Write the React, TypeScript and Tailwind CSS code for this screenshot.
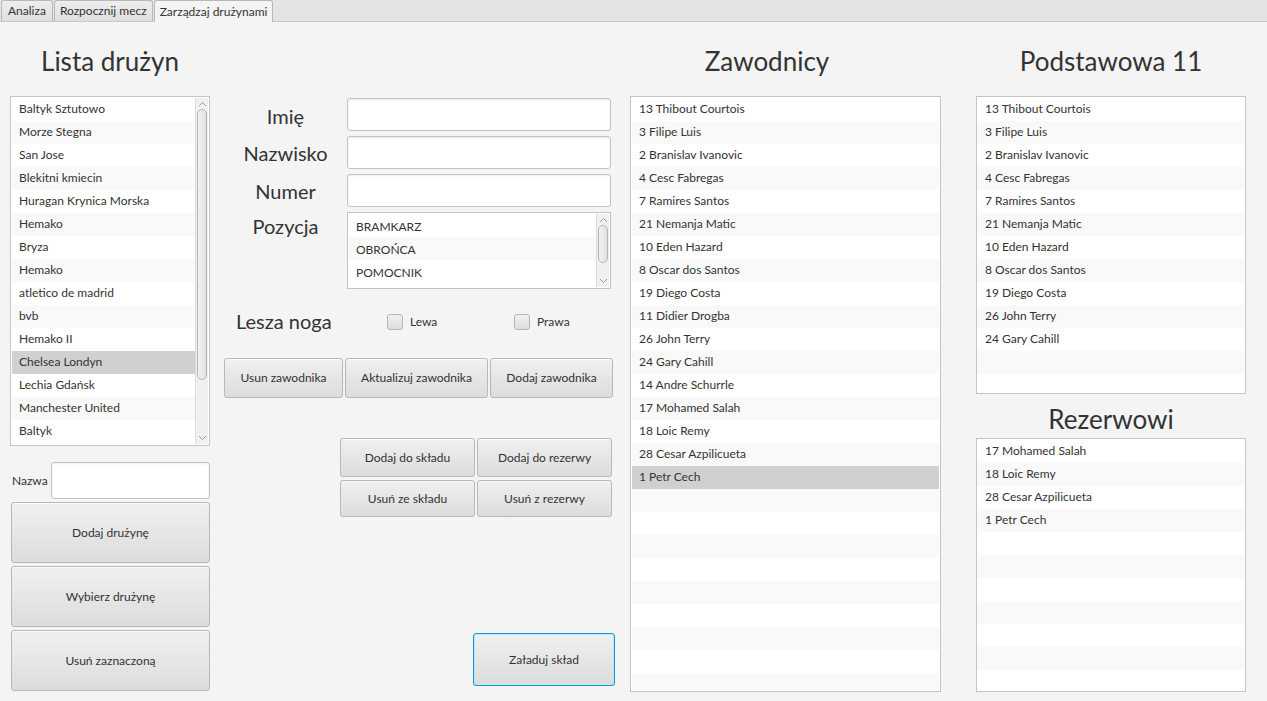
import type { FC, ReactNode } from 'react';

const teams = [
  'Baltyk Sztutowo',
  'Morze Stegna',
  'San Jose',
  'Blekitni kmiecin',
  'Huragan Krynica Morska',
  'Hemako',
  'Bryza',
  'Hemako',
  'atletico de madrid',
  'bvb',
  'Hemako II',
  'Chelsea Londyn',
  'Lechia Gdańsk',
  'Manchester United',
  'Baltyk',
];

const players = [
  '13 Thibout Courtois',
  '3 Filipe Luis',
  '2 Branislav Ivanovic',
  '4 Cesc Fabregas',
  '7 Ramires Santos',
  '21 Nemanja Matic',
  '10 Eden Hazard',
  '8 Oscar dos Santos',
  '19 Diego Costa',
  '11 Didier Drogba',
  '26 John Terry',
  '24 Gary Cahill',
  '14 Andre Schurrle',
  '17 Mohamed Salah',
  '18 Loic Remy',
  '28 Cesar Azpilicueta',
  '1 Petr Cech',
];

const firstEleven = players.slice(0, 12).filter((p) => p !== '11 Didier Drogba');
const reserves = ['17 Mohamed Salah', '18 Loic Remy', '28 Cesar Azpilicueta', '1 Petr Cech'];

interface ListProps {
  items: string[]
  rows: number
  selected?: number
  className?: string
  scroll?: boolean
}

const ScrollBar: FC<{ thumb?: string }> = ({ thumb }) => (
  <div className="flex w-[13px] shrink-0 flex-col items-center border-l border-[#dcdcdc] bg-[#f0f0f0]">
    <svg className="mt-[3px] h-[6px] w-[9px]" viewBox="0 0 9 6">
      <path d="M1 5L4.5 1.5L8 5" fill="none" stroke="#9a9a9a" strokeWidth="1" />
    </svg>
    <div
      className={`mt-[2px] w-[10px] rounded-[5px] border border-[#b4b4b4] bg-gradient-to-r from-[#f2f2f2] to-[#e2e2e2] ${
        thumb ?? 'h-[271px]'
      }`}
    />
    <div className="flex-1" />
    <svg className="mb-[3px] h-[6px] w-[9px]" viewBox="0 0 9 6">
      <path d="M1 1L4.5 4.5L8 1" fill="none" stroke="#9a9a9a" strokeWidth="1" />
    </svg>
  </div>
);

const ListView: FC<ListProps> = ({ items, rows, selected, className, scroll }) => {
  const cells = Array.from({ length: rows }, (_, i) => items[i] ?? '');
  return (
    <div className={`flex overflow-hidden border border-[#c4c4c4] bg-white p-px ${className ?? ''}`}>
      <div className="flex-1 overflow-hidden">
        {cells.map((item, i) => (
          <div
            key={i}
            className={`h-[23px] truncate pl-[7px] text-[12px] leading-[22px] text-[#333333] ${
              i === selected ? 'bg-[#d0d0d0]' : i % 2 === 1 ? 'bg-[#f9f9f9]' : 'bg-white'
            }`}
          >
            {item}
          </div>
        ))}
      </div>
      {scroll && <ScrollBar />}
    </div>
  );
};

const Button: FC<{ children: ReactNode, className?: string, focused?: boolean }> = ({
  children,
  className,
  focused,
}) => (
  <div
    className={`flex items-center justify-center rounded-[3px] border bg-gradient-to-b from-[#f0f0f0] to-[#dcdcdc] text-[12px] text-[#333333] shadow-[inset_0_1px_0_#fafafa] ${
      focused ? 'border-[#039ed3] ring-1 ring-inset ring-[#bfe6f5]' : 'border-[#b8b8b8]'
    } ${className ?? ''}`}
  >
    {children}
  </div>
);

const TextField: FC<{ className?: string }> = ({ className }) => (
  <div
    className={`rounded-[3px] border border-[#c2c2c2] bg-white shadow-[inset_0_1px_2px_rgba(0,0,0,0.08)] ${className ?? ''}`}
  />
);

const CheckBox: FC<{ label: string, className?: string }> = ({ label, className }) => (
  <div className={`flex items-center ${className ?? ''}`}>
    <div className="h-[16px] w-[16px] rounded-[3px] border border-[#b5b5b5] bg-gradient-to-b from-[#f0f0f0] to-[#dedede]" />
    <span className="ml-[7px] text-[12px] text-[#333333]">{label}</span>
  </div>
);

const Title: FC<{ children: ReactNode, className?: string }> = ({ children, className }) => (
  <div className={`flex items-center justify-center text-[26px] text-[#333333] ${className ?? ''}`}>
    {children}
  </div>
);

export default function App() {
  return (
    <div
      className="flex h-[701px] w-[1267px] flex-col overflow-hidden bg-[#f4f4f4]"
      style={{ fontFamily: '"Segoe UI", Lato, "Liberation Sans", sans-serif' }}
    >
      <div className="flex h-[22px] shrink-0 items-end border-b border-[#c8c8c8] bg-[#e4e4e4] pl-px">
        <div className="flex h-[21px] items-center rounded-t-[3px] border border-b-0 border-[#b8b8b8] bg-gradient-to-b from-[#eeeeee] to-[#dedede] px-[6px] text-[12px] text-[#333333]">
          Analiza
        </div>
        <div className="ml-px flex h-[21px] items-center rounded-t-[3px] border border-b-0 border-[#b8b8b8] bg-gradient-to-b from-[#eeeeee] to-[#dedede] px-[5px] text-[12px] text-[#333333]">
          Rozpocznij mecz
        </div>
        <div className="-mb-px ml-px flex h-[22px] items-center rounded-t-[3px] border border-b-0 border-[#b8b8b8] bg-[#f4f4f4] px-[5px] text-[12px] text-[#333333]">
          Zarządzaj drużynami
        </div>
      </div>

      <div className="flex flex-1">
        {/* lista drużyn */}
        <div className="ml-[10px] flex w-[200px] flex-col">
          <Title className="h-[74px] pt-[4px]">Lista drużyn</Title>
          <ListView items={teams} rows={15} selected={11} scroll className="h-[350px]" />
          <div className="mt-[16px] flex h-[37px] items-center">
            <span className="ml-[2px] w-[39px] text-[12px] text-[#333333]">Nazwa</span>
            <TextField className="h-[37px] flex-1" />
          </div>
          <div className="mt-[3px] flex flex-col gap-[3px] pl-px">
            <Button className="h-[61px]">Dodaj drużynę</Button>
            <Button className="h-[61px]">Wybierz drużynę</Button>
            <Button className="h-[61px]">Usuń zaznaczoną</Button>
          </div>
        </div>

        {/* formularz zawodnika */}
        <div className="ml-[14px] flex w-[391px] flex-col">
          <div className="mt-[76px] flex">
            <div className="flex w-[123px] flex-col text-[20px] text-[#333333]">
              <div className="flex h-[38px] items-center justify-center pb-[2px]">Imię</div>
              <div className="flex h-[38px] items-center justify-center pb-[4px]">Nazwisko</div>
              <div className="flex h-[38px] items-center justify-center pb-[5px]">Numer</div>
              <div className="flex h-[28px] items-center justify-center">Pozycja</div>
            </div>
            <div className="flex w-[264px] flex-col gap-[5px]">
              <TextField className="h-[33px]" />
              <TextField className="h-[33px]" />
              <TextField className="h-[33px]" />
              <div className="flex h-[77px] border border-[#c4c4c4] bg-white p-px">
                <div className="flex-1">
                  {['BRAMKARZ', 'OBROŃCA', 'POMOCNIK'].map((p, i) => (
                    <div
                      key={p}
                      className={`h-[23px] pl-[7px] text-[12px] leading-[25px] text-[#333333] ${
                        i % 2 === 1 ? 'bg-[#f9f9f9]' : 'bg-white'
                      }`}
                    >
                      {p}
                    </div>
                  ))}
                </div>
                <ScrollBar thumb="h-[38px]" />
              </div>
            </div>
          </div>

          <div className="mt-[20px] flex h-[26px] items-center">
            <span className="ml-[12px] w-[151px] pb-[2px] text-[20px] text-[#333333]">Lesza noga</span>
            <CheckBox label="Lewa" className="w-[127px]" />
            <CheckBox label="Prawa" />
          </div>

          <div className="mt-[23px] flex gap-[2px]">
            <Button className="h-[40px] w-[119px]">Usun zawodnika</Button>
            <Button className="h-[40px] w-[143px]">Aktualizuj zawodnika</Button>
            <Button className="h-[40px] w-[123px]">Dodaj zawodnika</Button>
          </div>

          <div className="ml-[116px] mt-[40px] grid grid-cols-[135px_135px] gap-x-[2px] gap-y-[3px]">
            <Button className="h-[39px]">Dodaj do składu</Button>
            <Button className="h-[39px]">Dodaj do rezerwy</Button>
            <Button className="h-[37px]">Usuń ze składu</Button>
            <Button className="h-[37px]">Usuń z rezerwy</Button>
          </div>

          <Button focused className="ml-[249px] mt-[116px] h-[53px] w-[142px]">
            Załaduj skład
          </Button>
        </div>

        {/* zawodnicy */}
        <div className="ml-[15px] flex w-[311px] flex-col">
          <Title className="h-[74px] pr-[37px] pt-[4px]">Zawodnicy</Title>
          <ListView items={players} rows={26} selected={16} className="h-[596px]" />
        </div>

        {/* skład */}
        <div className="ml-[35px] flex w-[270px] flex-col">
          <Title className="h-[74px] pt-[4px]">Podstawowa 11</Title>
          <ListView items={firstEleven} rows={13} className="h-[298px]" />
          <Title className="h-[44px] pt-[7px]">Rezerwowi</Title>
          <ListView items={reserves} rows={11} className="h-[254px]" />
        </div>
      </div>
    </div>
  );
}
